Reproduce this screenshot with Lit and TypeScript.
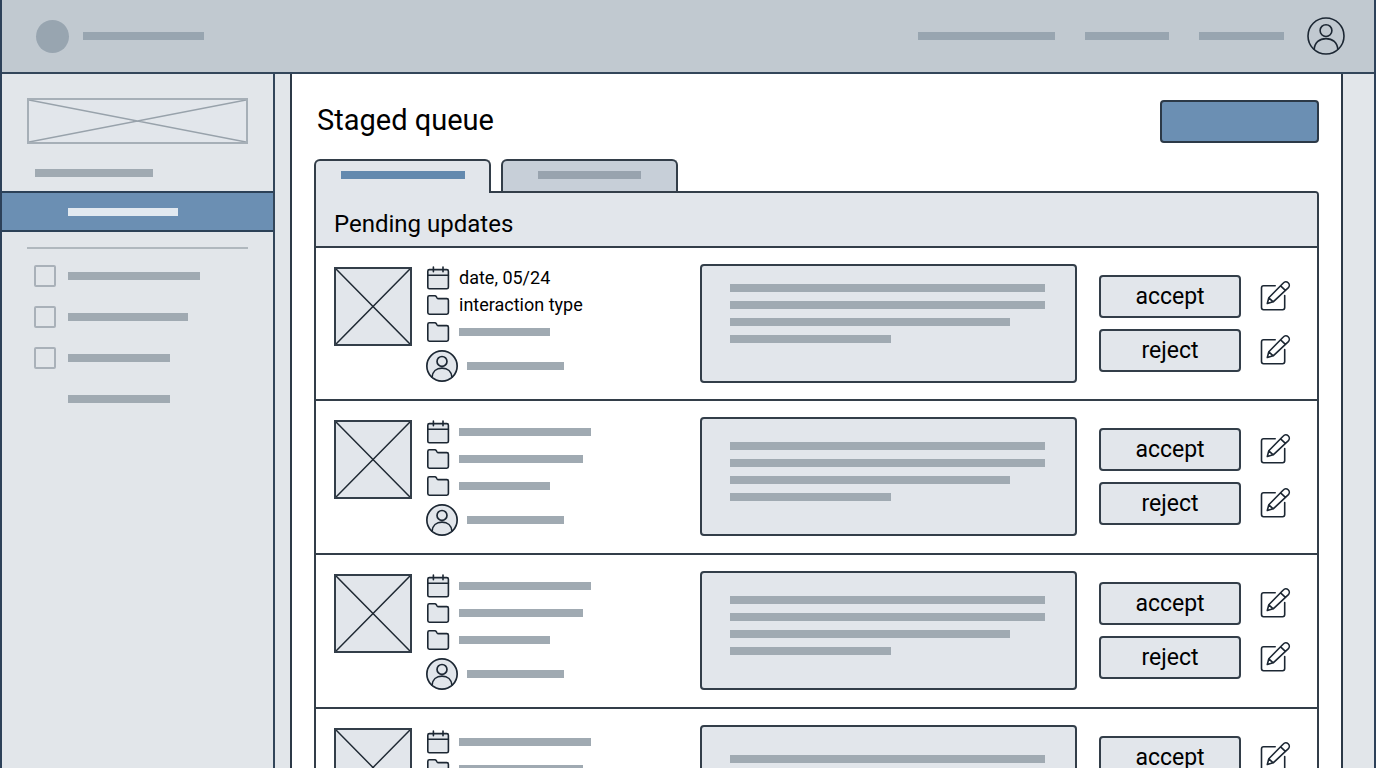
import { LitElement, html, svg, css } from "lit";
import { customElement, property } from "lit/decorators.js";
import { classMap } from "lit/directives/class-map.js";

type IconName = "calendar" | "folder" | "user" | "edit";

interface MetaLine {
  icon: IconName;
  text?: string;
  bar?: number;
}

interface QueueEntry {
  meta: MetaLine[];
  inset: "small" | "medium" | "large";
}

const blankMeta: MetaLine[] = [
  { icon: "calendar", bar: 132 },
  { icon: "folder", bar: 124 },
  { icon: "folder", bar: 91 },
  { icon: "user", bar: 97 },
];

const entries: QueueEntry[] = [
  {
    inset: "small",
    meta: [
      { icon: "calendar", text: "date, 05/24" },
      { icon: "folder", text: "interaction type" },
      { icon: "folder", bar: 91 },
      { icon: "user", bar: 97 },
    ],
  },
  { inset: "medium", meta: blankMeta },
  { inset: "medium", meta: blankMeta },
  { inset: "large", meta: blankMeta },
];

const copyLines = [100, 100, 89, 51];

const glyphs = {
  calendar: {
    box: "0 0 24 24",
    art: svg`<rect x="1.8" y="3.6" width="20.6" height="19.2" rx="1.6"/>
      <path d="M1.8 9.2H22.4M7.4 1V5.8M17 1V5.8"/>`,
  },
  folder: {
    box: "0 0 24 24",
    art: svg`<path d="M1.8 19.6V4.4Q1.8 2.8 3.4 2.8H8.8Q9.8 2.8 10.3 3.6L11 4.8Q11.5 5.6 12.5 5.6H20.8Q22.4 5.6 22.4 7.2V19.6Q22.4 21.2 20.8 21.2H3.4Q1.8 21.2 1.8 19.6Z"/>`,
  },
  user: {
    box: "0 0 38 38",
    art: svg`<circle cx="19" cy="19" r="18"/><circle cx="19" cy="13.6" r="5.9"/>
      <path d="M7.2 32.4C7.6 25.6 12.4 21.6 19 21.6S30.4 25.6 30.8 32.4"/>`,
  },
  edit: {
    box: "0 1 32 32",
    art: svg`<path d="M15.2 5.8H3.6Q1.5 5.8 1.5 7.9V27.6Q1.5 29.7 3.6 29.7H22.6Q24.7 29.7 24.7 27.6V15.6"/>
      <path d="M7.3 23.5L8.8 17.8L23.3 3A2.9 2.9 0 0 1 28.4 7.6L13.2 21.8ZM20.6 5.8L25.4 10.3M8.8 17.8L13.2 21.8"/>`,
  },
};

@customElement("wire-icon")
class WireIcon extends LitElement {
  @property() name: IconName = "folder";

  static styles = css`
    :host {
      display: block;
    }
    .glyph {
      display: block;
      width: 100%;
      height: 100%;
      fill: var(--icon-fill, none);
      stroke: #1c2733;
      stroke-width: var(--icon-stroke, 1.6);
      stroke-linejoin: round;
      stroke-linecap: round;
    }
  `;

  render() {
    const glyph = glyphs[this.name];
    return html`<svg class="glyph" viewBox=${glyph.box} aria-hidden="true">${glyph.art}</svg>`;
  }
}

@customElement("crossed-box")
class CrossedBox extends LitElement {
  static styles = css`
    :host {
      display: block;
      box-sizing: border-box;
      border: 2px solid var(--cross-edge, #333e49);
      background: #e2e6eb;
    }
    .cross {
      display: block;
      width: 100%;
      height: 100%;
      stroke: var(--cross-color, #1f2933);
      stroke-width: 1.5;
    }
  `;

  render() {
    return html`<svg class="cross" viewBox="0 0 100 100" preserveAspectRatio="none" aria-hidden="true">
      <path d="M0 0L100 100M100 0L0 100" vector-effect="non-scaling-stroke" />
    </svg>`;
  }
}

@customElement("queue-row")
class QueueRow extends LitElement {
  @property({ attribute: false }) entry: QueueEntry = entries[0];

  static styles = css`
    :host {
      display: grid;
      grid-template-columns: 78px minmax(0, 288fr) minmax(0, 377fr) auto;
      padding: 16px 25px 17px 18px;
      border-bottom: 2px solid #333e49;
    }
    :host(:first-of-type) {
      padding-bottom: 16px;
    }
    .thumb {
      height: 79px;
      margin-top: 3px;
    }
    .meta {
      list-style: none;
      margin: 0;
      padding: 1px 0 0 15px;
    }
    .meta.small {
      padding-top: 0;
      padding-bottom: 1px;
    }
    .meta.large {
      padding-top: 3px;
    }
    .item {
      display: flex;
      align-items: center;
      gap: 9px;
      height: 27px;
      font-size: 18px;
      line-height: 24px;
      white-space: nowrap;
    }
    .item.person {
      height: 32px;
      margin-top: 5px;
    }
    .icon {
      flex: none;
      width: 24px;
      height: 24px;
      margin-left: -1px;
      --icon-fill: #e2e6eb;
    }
    .person .icon {
      width: 32px;
      height: 32px;
      --icon-stroke: 2;
    }
    .bar {
      height: 8px;
      background: #a0aab2;
    }
    .copy {
      display: flex;
      flex-direction: column;
      gap: 9px;
      padding: 23px 30px 0 28px;
      border: 2px solid #333e49;
      border-radius: 4px;
      background: #e2e6eb;
    }
    .copy.small {
      padding-top: 18px;
    }
    .copy.large {
      padding-top: 28px;
    }
    .actions {
      display: grid;
      grid-template-columns: 142px 32px;
      grid-auto-rows: 43px;
      align-items: center;
      gap: 11px 19px;
      padding: 11px 0 0 22px;
    }
    .choice {
      height: 100%;
      padding: 0;
      border: 2px solid #333e49;
      border-radius: 4px;
      background: #e2e6eb;
      color: #000;
      font: 400 23px/28px Roboto, sans-serif;
    }
    .edit {
      width: 32px;
      height: 32px;
      padding: 0;
      border: 0;
      background: none;
    }
  `;

  private renderAction(label: string) {
    return html`<button class="choice" type="button">${label}</button>
      <button class="edit" type="button" aria-label="Edit before ${label}">
        <wire-icon name="edit"></wire-icon>
      </button>`;
  }

  render() {
    return html`
      <crossed-box class="thumb"></crossed-box>
      <ul class="meta ${this.entry.inset}">
        ${this.entry.meta.map(
          (line) => html`<li class=${classMap({ item: true, person: line.icon === "user" })}>
            <wire-icon class="icon" name=${line.icon}></wire-icon>
            ${line.text
              ? html`<span>${line.text}</span>`
              : html`<span class="bar" style="width:${line.bar}px"></span>`}
          </li>`
        )}
      </ul>
      <div class="copy ${this.entry.inset}">
        ${copyLines.map((width) => html`<div class="bar" style="width:${width}%"></div>`)}
      </div>
      <div class="actions">${this.renderAction("accept")}${this.renderAction("reject")}</div>
    `;
  }
}

@customElement("app-root")
class AppRoot extends LitElement {
  static styles = css`
    :host {
      display: grid;
      grid-template-rows: auto minmax(0, 1fr);
      box-sizing: border-box;
      height: 100vh;
      border: solid #2d4159;
      border-width: 0 2px;
      background: #e2e6ea;
      color: #000;
      font-family: Roboto, sans-serif;
    }
    .bar {
      display: block;
      height: 8px;
      background: #a0aab2;
    }
    .top {
      display: flex;
      align-items: center;
      height: 72px;
      padding: 0 29px 0 34px;
      border-bottom: 2px solid #33465a;
      background: #c1c9d0;
    }
    .top .bar {
      background: #98a5b0;
    }
    .brand {
      display: flex;
      align-items: center;
      gap: 14px;
      margin-right: auto;
    }
    .logo {
      width: 33px;
      height: 33px;
      border-radius: 50%;
      background: #98a5b0;
    }
    .links {
      display: flex;
      gap: 30px;
      margin-right: 23px;
    }
    .account {
      width: 38px;
      height: 38px;
      padding: 0;
      border: 0;
      background: none;
    }
    .body {
      display: grid;
      grid-template-columns: 273px minmax(0, 1fr);
      gap: 15px;
      padding-right: 31px;
      min-height: 0;
    }
    .side {
      border-right: 2px solid #33465a;
    }
    .banner {
      height: 46px;
      margin: 24px 25px 25px;
      --cross-color: #98a2ab;
      --cross-edge: #a6afb7;
    }
    .section {
      width: 118px;
      margin: 0 0 14px 33px;
    }
    .current {
      display: flex;
      align-items: center;
      height: 37px;
      padding-left: 66px;
      border: solid #2c4157;
      border-width: 2px 0;
      background: #6b8fb3;
    }
    .current .bar {
      background: #e2e9f0;
    }
    .rule {
      height: 2px;
      margin: 15px 25px 6px;
      border: 0;
      background: #b0b8be;
    }
    .option {
      display: flex;
      align-items: center;
      gap: 12px;
      height: 41px;
      padding-left: 32px;
    }
    .option.plain {
      padding-left: 66px;
    }
    .tick {
      appearance: none;
      box-sizing: border-box;
      width: 22px;
      height: 22px;
      margin: 0;
      border: 2px solid #a9b1b9;
      border-radius: 2px;
    }
    .main {
      overflow: auto;
      scrollbar-width: none;
      padding: 26px 22px 0;
      border: solid #2c3947;
      border-width: 0 2px;
      background: #fff;
    }
    .heading {
      display: flex;
      align-items: center;
      justify-content: space-between;
      padding-left: 3px;
    }
    .title {
      margin: 0;
      padding-bottom: 4px;
      font-size: 29px;
      line-height: 36px;
      font-weight: 400;
    }
    .primary {
      width: 159px;
      height: 43px;
      border: 2px solid #2c3947;
      border-radius: 4px;
      background: #6b8fb3;
    }
    .tabs {
      display: flex;
      gap: 10px;
      margin-top: 16px;
    }
    .tab {
      box-sizing: border-box;
      display: flex;
      justify-content: center;
      width: 177px;
      height: 32px;
      padding: 10px 0 0;
      border: 2px solid #333e49;
      border-bottom: 0;
      border-radius: 6px 6px 0 0;
      background: #c7cfd8;
    }
    .tab .bar {
      background: #98a3ae;
    }
    .tab.active {
      position: relative;
      height: 34px;
      margin-bottom: -2px;
      background: #e2e6eb;
    }
    .tab.active .bar {
      background: #6389ae;
    }
    .panel {
      border: 2px solid #333e49;
      border-radius: 0 4px 0 0;
    }
    .caption {
      margin: 0;
      padding: 16px 18px 7px;
      border-bottom: 2px solid #333e49;
      border-radius: 0 2px 0 0;
      background: #e2e6eb;
      font-size: 24px;
      line-height: 30px;
      font-weight: 400;
    }
  `;

  private bar(width: number) {
    return html`<span class="bar" style="width:${width}px"></span>`;
  }

  render() {
    return html`
      <header class="top">
        <div class="brand"><span class="logo"></span>${this.bar(121)}</div>
        <nav class="links" aria-label="Primary">
          ${[137, 84, 85].map((w, i) => html`<a href="#link-${i + 1}" aria-label="Link ${i + 1}">${this.bar(w)}</a>`)}
        </nav>
        <button class="account" type="button" aria-label="Account">
          <wire-icon name="user"></wire-icon>
        </button>
      </header>
      <div class="body">
        <aside class="side">
          <crossed-box class="banner"></crossed-box>
          <div class="bar section"></div>
          <a class="current" href="#queue" aria-label="Staged queue" aria-current="page">${this.bar(110)}</a>
          <hr class="rule" />
          ${[132, 120, 102].map(
            (w, i) => html`<label class="option">
              <input class="tick" type="checkbox" aria-label="Filter ${i + 1}" />${this.bar(w)}
            </label>`
          )}
          <a class="option plain" href="#more" aria-label="More filters">${this.bar(102)}</a>
        </aside>
        <main class="main">
          <div class="heading">
            <h1 class="title">Staged queue</h1>
            <button class="primary" type="button" aria-label="Primary action"></button>
          </div>
          <div class="tabs" role="tablist">
            <button class="tab active" type="button" role="tab" aria-selected="true" aria-label="Pending">
              ${this.bar(124)}
            </button>
            <button class="tab" type="button" role="tab" aria-selected="false" aria-label="Completed">
              ${this.bar(103)}
            </button>
          </div>
          <section class="panel">
            <h2 class="caption">Pending updates</h2>
            ${entries.map((entry) => html`<queue-row .entry=${entry}></queue-row>`)}
          </section>
        </main>
      </div>
    `;
  }
}
